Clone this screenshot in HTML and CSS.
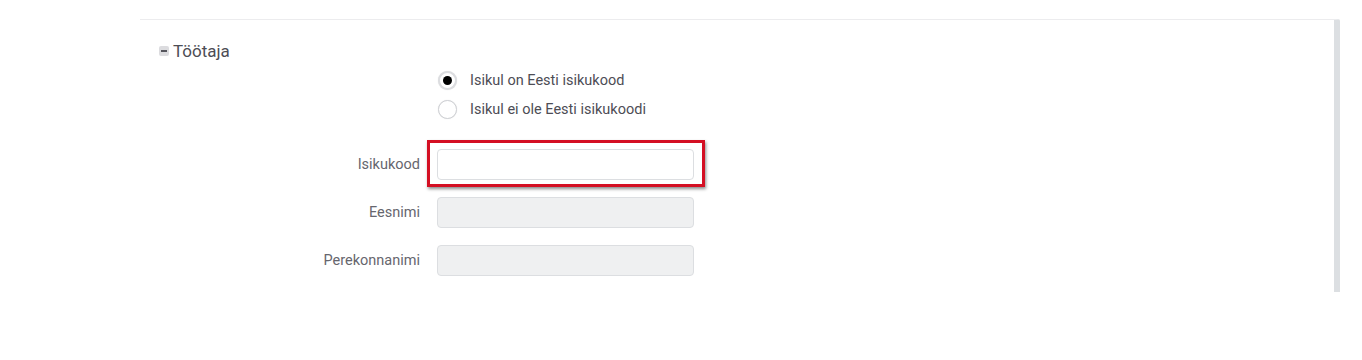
FILE: index.html
```html
<!DOCTYPE html>
<html>
<head>
    <meta name="viewport" content="width=device-width, initial-scale=1.0">
    <link rel="stylesheet" href="styles.css">
</head>

<body>
    <div class="panel">
        <div class="section-header">
            <span class="toggle"></span>
            <span class="section-title">Töötaja</span>
        </div>

        <div class="radio-group">
            <label class="radio-row">
                <input type="radio" name="isikukood" checked>
                <span>Isikul on Eesti isikukood</span>
            </label>
            <label class="radio-row">
                <input type="radio" name="isikukood">
                <span>Isikul ei ole Eesti isikukoodi</span>
            </label>
        </div>

        <div class="form-rows">
            <div class="form-row">
                <label class="form-label">Isikukood</label>
                <div class="field highlighted">
                    <input class="text-input" type="text">
                </div>
            </div>
            <div class="form-row">
                <label class="form-label">Eesnimi</label>
                <div class="field">
                    <input class="text-input" type="text" disabled>
                </div>
            </div>
            <div class="form-row">
                <label class="form-label">Perekonnanimi</label>
                <div class="field">
                    <input class="text-input" type="text" disabled>
                </div>
            </div>
        </div>
    </div>
</body>
</html>
```

FILE: styles.css
```css
* {
    margin: 0;
    padding: 0;
    box-sizing: border-box;
    font-family: Roboto, 'Liberation Sans', sans-serif;
}

:root {
    --text-primary: #4d4d55;
    --text-secondary: #66666e;
    --border-color: #dcdee1;
    --disabled-bg: #eff0f1;
    --highlight: #d40f23;
}

body {
    background: #fff;
    color: var(--text-primary);
}

.panel {
    margin: 19px 0 0 140px;
    width: 1200px;
    height: 273px;
    border-top: 1px solid #ececee;
    border-right: 6px solid #dcdfe2;
    border-top-right-radius: 2px;
    padding-top: 21px;
}

.section-header {
    display: flex;
    align-items: center;
    gap: 4px;
    padding-left: 19px;
    height: 20px;
}

.toggle {
    width: 10px;
    height: 10px;
    border-radius: 2px;
    background: #dcdcdf;
    display: flex;
    align-items: center;
    justify-content: center;
}

.toggle::before {
    content: "";
    width: 6px;
    height: 2px;
    background: #55555c;
}

.section-title {
    font-size: 17px;
    line-height: 20px;
    color: var(--text-primary);
}

.radio-group {
    margin-top: 5px;
    padding-left: 298px;
    display: flex;
    flex-direction: column;
}

.radio-row {
    display: flex;
    align-items: center;
    gap: 13px;
    height: 29px;
    font-size: 14.5px;
    color: var(--text-primary);
}

.radio-row input {
    appearance: none;
    flex: none;
    width: 19px;
    height: 19px;
    border-radius: 50%;
    border: 1.5px solid #cfd1d5;
    background: #fff;
    box-shadow: 0 0 1px rgba(0, 0, 0, 0.15);
    display: flex;
    align-items: center;
    justify-content: center;
}

.radio-row input:checked {
    border: 2.5px solid #dcdde0;
}

.radio-row input:checked::before {
    content: "";
    width: 9px;
    height: 9px;
    border-radius: 50%;
    background: #000;
}

.form-rows {
    margin-top: 25px;
    display: flex;
    flex-direction: column;
    gap: 17px;
}

.form-row {
    display: flex;
    align-items: center;
    gap: 17px;
}

.form-label {
    width: 280px;
    text-align: right;
    font-size: 14.5px;
    color: var(--text-secondary);
}

.field {
    position: relative;
}

.text-input {
    display: block;
    width: 257px;
    height: 31px;
    border: 1px solid var(--border-color);
    border-radius: 4px;
    background: #fff;
    font-size: 14px;
    padding: 0 8px;
    outline: none;
}

.text-input:disabled {
    background: var(--disabled-bg);
}

/* annotation frame round the first field */
.highlighted::after {
    content: "";
    position: absolute;
    left: -10px;
    top: -9px;
    right: -11px;
    bottom: -7px;
    border: 3px solid var(--highlight);
    box-shadow: 1px 2px 3px rgba(0, 0, 0, 0.45);
}
```
